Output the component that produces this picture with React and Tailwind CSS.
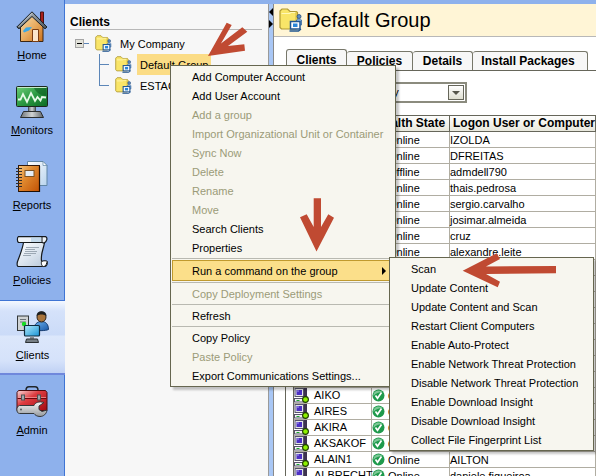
import React from "react";

function HomeIcon() {
  return (
    <svg width="32" height="32" viewBox="0 0 32 32" aria-hidden="true">
      <defs>
        <linearGradient id="wall" x1="0" y1="0" x2="1" y2="1">
          <stop offset="0" stopColor="#f6dcae" />
          <stop offset="0.5" stopColor="#e9ad62" />
          <stop offset="1" stopColor="#c96f1c" />
        </linearGradient>
        <linearGradient id="roof" x1="0" y1="0" x2="1" y2="0">
          <stop offset="0" stopColor="#4d565c" />
          <stop offset="0.5" stopColor="#9aa2a8" />
          <stop offset="1" stopColor="#4b5459" />
        </linearGradient>
      </defs>
      <path d="M24.500 1h3v13h-3z" fill="#a8201c" stroke="#4a1210" />
      <path d="M4.500 16L16 5l11 11v14.500h-22.500z" fill="url(#wall)" stroke="#3b2512" />
      <path d="M7 20l3-3.500 6-.5-3 3.500-5 2z" fill="#3aa7e6" />
      <path d="M16.500 18.500h6v12h-6z" fill="#fbe6cb" stroke="#7a3c10" />
      <path d="M16 .8L31 16l-2 1.800L16 5.500 3 17.800.8 16z" fill="url(#roof)" stroke="#1d2326" />
      <path d="M16 2.300L2.500 16" stroke="#e2e7ea" strokeWidth="0.800" />
    </svg>
  );
}

function MonitorsIcon() {
  return (
    <svg width="32" height="32" viewBox="0 0 32 32" aria-hidden="true">
      <defs>
        <linearGradient id="screen" x1="0" y1="0" x2="1" y2="1">
          <stop offset="0" stopColor="#6fd07a" />
          <stop offset="0.5" stopColor="#2c9a42" />
          <stop offset="1" stopColor="#0b6a24" />
        </linearGradient>
        <linearGradient id="metal" x1="0" y1="0" x2="1" y2="0">
          <stop offset="0" stopColor="#6d7276" />
          <stop offset="0.5" stopColor="#d0d3d5" />
          <stop offset="1" stopColor="#5c6165" />
        </linearGradient>
      </defs>
      <path d="M12.500 20h7v6h-7z" fill="url(#metal)" stroke="#4c5154" />
      <path d="M7.500 25.500h17l3 6h-23z" fill="url(#metal)" stroke="#2b2e30" />
      <rect x="0.500" y="0.500" width="31" height="20" rx="1" fill="url(#screen)" stroke="#1c261e" />
      <path d="M1.500 1.500h29" stroke="#c6ebc9" />
      <path d="M18 2h12.500v8C26 10 20 7 18 2z" fill="#0c5a20" opacity="0.550" />
      <path d="M2 13.500h2.500L7 8l4 8 4-9 4 8 2.500-4 3 3.500L26 11l4 .5" fill="none" stroke="#e8fbe8" strokeWidth="1.800" />
    </svg>
  );
}

function ReportsIcon() {
  return (
    <svg width="32" height="32" viewBox="0 0 32 32" aria-hidden="true">
      <defs>
        <linearGradient id="book" x1="0" y1="0" x2="1" y2="1">
          <stop offset="0" stopColor="#f7c880" />
          <stop offset="0.400" stopColor="#e08a30" />
          <stop offset="1" stopColor="#c25204" />
        </linearGradient>
        <linearGradient id="sheet" x1="0" y1="0" x2="1" y2="1">
          <stop offset="0" stopColor="#ffffff" />
          <stop offset="1" stopColor="#b9d4ee" />
        </linearGradient>
      </defs>
      <path d="M11.500 .5H27l4 4v20H11.500z" fill="url(#sheet)" stroke="#6186a5" />
      <path d="M27 .5v4h4z" fill="#fff" stroke="#6186a5" strokeWidth="0.700" />
      <rect x="2.500" y="4.500" width="21" height="26" fill="url(#book)" stroke="#33190a" />
      <path d="M3 30.500h20.500V5" fill="none" stroke="#1d0e06" strokeWidth="1.200" />
      <rect x="9" y="9.500" width="9" height="6" fill="#e5eef6" stroke="#7c5427" />
      <path d="M0 7.500h6M0 10.500h6M0 13.500h6M0 16.500h6M0 19.500h6M0 22.500h6M0 25.500h6" stroke="#2f2a28" strokeWidth="1" />
    </svg>
  );
}

function PoliciesIcon() {
  return (
    <svg width="32" height="32" viewBox="0 0 32 32" aria-hidden="true">
      <defs>
        <linearGradient id="paper" x1="0" y1="0" x2="1" y2="1">
          <stop offset="0" stopColor="#ffffff" />
          <stop offset="0.500" stopColor="#dce5ef" />
          <stop offset="1" stopColor="#b6c6d8" />
        </linearGradient>
      </defs>
      <path d="M7.500 6.500h21c-1 7-4 11-3 18.500l5.500.5c.5 2 0 4.500-2 5H2c-1.500-1-1-3-.5-5C4 19 6.500 13 7.500 6.500z" fill="url(#paper)" stroke="#15191c" strokeWidth="1.200" />
      <path d="M2.500.6h27c2.500 1 1.500 5-1.500 6.500l-2-.6H2.500C1 5.500 1 1.500 2.500.6z" fill="#eef3f8" stroke="#15191c" strokeWidth="1.200" />
      <path d="M15 1.200h10v4.800H15z" fill="#a9c9e4" opacity="0.600" />
      <path d="M26 1v5.500" stroke="#15191c" />
      <path d="M25.500 25.500c2-1 5.500-1 5.500 0s-1 5-3 5c-2 .5-3-2.500-2.500-5z" fill="#fff" stroke="#15191c" />
      <path d="M10 11.500h13M9 13.500h10M9 15.500h12M8 17.500h12M7 19.500h8" stroke="#8b98a4" strokeWidth="0.800" />
    </svg>
  );
}

function ClientsIcon() {
  return (
    <svg width="32" height="32" viewBox="0 0 32 32" aria-hidden="true">
      <defs>
        <linearGradient id="shirt" x1="0" y1="0" x2="1" y2="1">
          <stop offset="0" stopColor="#6cb4f0" />
          <stop offset="1" stopColor="#1b58a8" />
        </linearGradient>
        <linearGradient id="glass" x1="0" y1="0" x2="1" y2="1">
          <stop offset="0" stopColor="#b4ebfb" />
          <stop offset="1" stopColor="#1793d6" />
        </linearGradient>
      </defs>
      <rect x="0.500" y="5" width="11" height="14.500" fill="#cfd3d5" stroke="#33383b" />
      <path d="M3 8.500h6M3 11h6" stroke="#6b7378" />
      <circle cx="7" cy="13" r="2.200" fill="#15dd22" />
      <path d="M17 18.500c0-5 3-8 7.500-8s7 3 7 8c-3 1.500-12 1.500-14.500 0z" fill="url(#shirt)" stroke="#173e72" />
      <ellipse cx="24.500" cy="6" rx="4.500" ry="5" fill="#a8743c" stroke="#2d2118" />
      <path d="M19.500 5c0-3 2-4.700 5-4.700S29.500 2 29.500 5c-3-2-7-2-10 0z" fill="#1c1f21" />
      <rect x="7.500" y="14.500" width="15" height="10.500" rx="1" fill="url(#glass)" stroke="#0d2a3d" strokeWidth="1.200" />
      <path d="M13 25.500h4V28h-4z" fill="#8b9298" />
      <path d="M9.500 28h11l1 3.500h-13z" fill="#777f85" stroke="#2b3033" />
    </svg>
  );
}

function AdminIcon() {
  return (
    <svg width="32" height="32" viewBox="0 0 32 32" aria-hidden="true">
      <defs>
        <linearGradient id="box" x1="0" y1="0" x2="1" y2="1">
          <stop offset="0" stopColor="#fbdada" />
          <stop offset="0.400" stopColor="#dd3c40" />
          <stop offset="1" stopColor="#a30812" />
        </linearGradient>
        <linearGradient id="steel" x1="0" y1="0" x2="0" y2="1">
          <stop offset="0" stopColor="#f7f7f7" />
          <stop offset="1" stopColor="#94999d" />
        </linearGradient>
      </defs>
      <path d="M10 4.500C10 2 11.500 .8 13 .8h6c2 0 3 1.200 3 3.700" fill="none" stroke="#21262a" strokeWidth="1.500" />
      <path d="M2.500 4.500h27l1.500 2v18H1v-18z" fill="url(#box)" stroke="#4c0b0e" />
      <path d="M1.500 12.500h29" stroke="#6d060c" />
      <path d="M2 11.500h28" stroke="#f5a0a2" strokeWidth="0.700" />
      <rect x="5.500" y="9" width="3" height="5" fill="#a3a8ab" stroke="#4d5255" />
      <rect x="21.500" y="9" width="3" height="5" fill="#a3a8ab" stroke="#4d5255" />
      <path d="M3.500 19.500h14.500c1-3 5-4.500 10-3l-5 3.500v3.500l3 2 5-1.500c-.5 4-3.500 6.500-7 6.500-3 0-5-1.500-6-3H3.500C0 27.500 0 20 3.500 19.500z" fill="url(#steel)" stroke="#33373a" />
      <circle cx="5" cy="23.500" r="1" fill="#555b5f" />
    </svg>
  );
}

function GroupFolder({ size }) {
  return (
    <svg width={size} height={size} viewBox="0 0 24 24" className="shrink-0" aria-hidden="true">
      <path d="M1 3l2-2h5.500L11 3.500h6.500l1 1V19l-1.500 2H2.500L1 19.500z" fill="#f9e568" stroke="#b09a35" strokeWidth="1.200" />
      <path d="M2.500 5.500h8l1.500-1h5" fill="none" stroke="#fff8b8" strokeWidth="1.200" />
      <path d="M17 3.500v16" stroke="#d3b93a" strokeWidth="1" />
      <circle cx="20" cy="8.500" r="2" fill="#5d8cc0" stroke="#2b4f7d" strokeWidth="0.800" />
      <path d="M17.500 12c.5-1.500 4.500-1.500 5 0v5h-5z" fill="#8fb9e4" stroke="#3a679c" strokeWidth="0.800" />
      <rect x="11.500" y="13.500" width="9.500" height="7.500" fill="#fff" stroke="#205590" strokeWidth="1.500" />
      <rect x="14" y="15.500" width="4.500" height="3.500" fill="#2a86d8" />
      <path d="M10.500 23h9l2.500-2" fill="none" stroke="#205590" strokeWidth="1.400" />
    </svg>
  );
}

function ComputerIcon() {
  return (
    <svg width="15" height="15" viewBox="0 0 15 15" className="shrink-0" aria-hidden="true">
      <path d="M9 0h4v14H9z" fill="#3d3350" />
      <path d="M9 1h1v10H9z" fill="#d8d8e0" />
      <rect x="1" y="0.500" width="8.500" height="8" fill="#e4e4e8" stroke="#55536a" />
      <rect x="2.500" y="2" width="5.500" height="5" fill="#4c2fc4" />
      <path d="M3 2.500h2v1H3z" fill="#a9a0ee" />
      <rect x="0.500" y="10.500" width="9" height="3.500" fill="#f4f4f4" stroke="#55536a" />
      <path d="M2.500 12.500h3" stroke="#18a52a" />
      <circle cx="11.500" cy="11.500" r="2.900" fill="#8cf000" stroke="#1c3a00" strokeWidth="1.100" />
    </svg>
  );
}

function CheckIcon() {
  return (
    <svg width="13" height="13" viewBox="0 0 13 13" className="shrink-0" aria-hidden="true">
      <circle cx="6.500" cy="6.500" r="6" fill="#1f9a4c" />
      <path d="M1.500 5a5.500 5.500 0 0 1 9-2C7 3 4 4 1.500 7z" fill="#7cc795" />
      <path d="M3.500 6.500l2 2.800L9.500 3.500" fill="none" stroke="#fff" strokeWidth="1.700" />
    </svg>
  );
}

const sections = [
  { label: "Home", Icon: HomeIcon },
  { label: "Monitors", Icon: MonitorsIcon },
  { label: "Reports", Icon: ReportsIcon },
  { label: "Policies", Icon: PoliciesIcon },
  { label: "Clients", Icon: ClientsIcon, active: true },
  { label: "Admin", Icon: AdminIcon },
];

function Sidebar() {
  return (
    <nav className="flex w-[65px] shrink-0 flex-col bg-[#8eb1ec]">
      {sections.map(({ label, Icon, active }) => (
        <button
          key={label}
          type="button"
          className={
            active
              ? "flex h-[75px] shrink-0 flex-col items-center border-t border-b-2 border-t-[#3f74d4] border-b-[#7088dc] bg-[linear-gradient(#f4f8ff_0px,#d5e2fa_10px,#cbdbf8_34px,#dce7fb_35px,#d5e2fa_60px,#c0d1f4_72px)] pt-[10px]"
              : "flex h-[75px] shrink-0 flex-col items-center border-r border-[#3f74d4] pt-[11px]"
          }
        >
          <Icon />
          <span className="mt-1 leading-4">
            <u>{label[0]}</u>
            {label.slice(1)}
          </span>
        </button>
      ))}
      <div className="grow border-r border-[#3f74d4]" />
    </nav>
  );
}

function TreePanel() {
  return (
    <aside className="w-[204px] shrink-0 border-r border-[#9a9a9a] bg-[#f7f7f7]">
      <h2 className="mr-[6px] ml-[5px] border-b border-[#b8b8b8] pt-[11px] text-xs leading-[14px] font-bold">Clients</h2>
      <ul className="pt-[3px]">
        <li>
          <div className="flex h-[21px] items-center pl-[10px]">
            <button type="button" aria-label="Collapse My Company" className="flex size-[9px] items-center justify-center border border-[#a5a5a5] bg-[#e2e2da]">
              <span className="h-px w-[5px] bg-black" />
            </button>
            <span className="mr-[6px] h-px w-[5px] bg-[#5c86b8]" />
            <GroupFolder size={17} />
            <span className="ml-2 leading-[22px]">My Company</span>
          </div>
          <ul>
            <li className="flex h-[21px] items-center pl-[34px]">
              <span className="mr-[6px] flex w-[10px] items-center self-stretch border-l border-[#5c86b8]">
                <span className="h-px w-full bg-[#5c86b8]" />
              </span>
              <GroupFolder size={17} />
              <span className="ml-[5px] h-[21px] bg-[#fbdc86] px-[3px] leading-[22px]">Default Group</span>
            </li>
            <li className="flex h-[21px] items-center pl-[34px]">
              <span className="mr-[6px] h-[11px] w-[10px] self-start border-b border-l border-[#5c86b8]" />
              <GroupFolder size={17} />
              <span className="ml-[5px] px-[3px] leading-[22px]">ESTAG</span>
            </li>
          </ul>
        </li>
      </ul>
    </aside>
  );
}

const clients = [
  { state: "Online", user: "IZOLDA" },
  { state: "Online", user: "DFREITAS" },
  { state: "Offline", user: "admdell790" },
  { state: "Online", user: "thais.pedrosa" },
  { state: "Online", user: "sergio.carvalho" },
  { state: "Online", user: "josimar.almeida" },
  { state: "Online", user: "cruz" },
  { state: "Online", user: "alexandre.leite" },
  {}, {}, {}, {}, {}, {}, {}, {},
  { name: "AIKO", state: "Online" },
  { name: "AIRES", state: "Online" },
  { name: "AKIRA", state: "Online" },
  { name: "AKSAKOF", state: "Online" },
  { name: "ALAIN1", state: "Online", user: "AILTON" },
  { name: "ALBRECHT", state: "Online", user: "daniele.figueiroa" },
];

const headCell = "h-[17px] border-y border-r border-[#66665a] p-0 text-xs leading-[15px] whitespace-nowrap";
const bodyCell = "h-4 border-r border-b border-[#b0ada2] p-0";

function ClientTable() {
  return (
    <table className="w-full table-fixed border-separate border-spacing-0 border-l border-[#66665a]">
      <colgroup>
        <col className="w-[78px]" />
        <col className="w-[78px]" />
        <col />
      </colgroup>
      <thead className="bg-[linear-gradient(#ffffff,#e6e6da)]">
        <tr>
          <th className={headCell}>Name</th>
          <th className={headCell}>Health State</th>
          <th className={headCell + " pl-[3px] text-left"}>Logon User or Computer</th>
        </tr>
      </thead>
      <tbody>
        {clients.map((c, i) => (
          <tr key={i}>
            <td className={bodyCell}>
              {c.name && (
                <div className="flex h-[15px] items-center gap-[5px]">
                  <ComputerIcon />
                  <span className="leading-[17px]">{c.name}</span>
                </div>
              )}
            </td>
            <td className={bodyCell}>
              {c.state && (
                <div className="flex h-[15px] items-center gap-[3px]">
                  <CheckIcon />
                  <span className="h-[15px] leading-[17px]">{c.state}</span>
                </div>
              )}
            </td>
            <td className={bodyCell}>
              <div className="h-[15px] leading-[17px]">{c.user}</div>
            </td>
          </tr>
        ))}
      </tbody>
    </table>
  );
}

const tab = "h-[19px] rounded-t-[3px] border border-b-0 border-[#77776a] bg-[#f7f7f7] text-xs leading-[18px] font-bold whitespace-nowrap";

function GroupPage() {
  return (
    <main className="flex min-w-0 flex-1 flex-col overflow-hidden bg-white">
      <header className="flex h-[33px] shrink-0 items-center gap-[3px] border-b border-[#b8b8b8] bg-[#fff5d6] pl-[5px]">
        <GroupFolder size={24} />
        <h1 className="text-xl leading-8">Default Group</h1>
      </header>
      <div className="flex h-[33px] shrink-0 items-end pl-3" role="tablist">
        <button type="button" role="tab" aria-selected="true" className={tab + " h-[21px] w-[61px] pb-px"}>Clients</button>
        <button type="button" role="tab" className={tab + " w-[66px] border-l-0"}>Policies</button>
        <button type="button" role="tab" className={tab + " w-[60px] border-l-0"}>Details</button>
        <button type="button" role="tab" className={tab + " w-[115px] border-l-0 pr-1"}>Install Packages</button>
      </div>
      <section className="ml-[11px] grow border-t border-l border-[#66665a] pt-[11px]">
        <div className="relative mb-3 ml-[3px] h-[21px] w-[178px]">
          <select aria-label="View" className="size-full appearance-none border-2 border-[#8b8b7e] bg-white pl-0.5 text-[11px] outline-none">
            <option>Protection technology</option>
          </select>
          <span className="pointer-events-none absolute top-[3px] right-[3px] flex h-[15px] w-4 items-center justify-center border border-[#66665a] bg-[linear-gradient(#ffffff,#deded0)]">
            <svg width="8" height="4" viewBox="0 0 8 4" aria-hidden="true">
              <path d="M0 0h8L4 4z" fill="#55554a" />
            </svg>
          </span>
        </div>
        <div className="pl-[7px]">
          <ClientTable />
        </div>
      </section>
    </main>
  );
}

function Item({ children, disabled }) {
  return (
    <button
      type="button"
      role="menuitem"
      disabled={disabled}
      className={
        disabled
          ? "block h-[19px] w-full pt-px pl-[21px] text-left leading-[18px] whitespace-nowrap text-[#9b9b78]"
          : "block h-[19px] w-full pt-px pl-[21px] text-left leading-[18px] whitespace-nowrap"
      }
    >
      {children}
    </button>
  );
}

function Separator() {
  return <hr className="mx-px my-px h-px border-0 bg-[#b9b9b1]" />;
}

function ContextMenu() {
  return (
    <div role="menu" className="absolute top-[65px] left-[170px] w-[226px] border border-[#66664f] bg-[#f7f6ef] py-px shadow-[3px_3px_2px_rgba(0,0,0,0.22)]">
      <Item>Add Computer Account</Item>
      <Item>Add User Account</Item>
      <Item disabled>Add a group</Item>
      <Item disabled>Import Organizational Unit or Container</Item>
      <Item disabled>Sync Now</Item>
      <Item disabled>Delete</Item>
      <Item disabled>Rename</Item>
      <Item disabled>Move</Item>
      <Item>Search Clients</Item>
      <Item>Properties</Item>
      <Separator />
      <button
        type="button"
        role="menuitem"
        aria-haspopup="menu"
        aria-expanded="true"
        className="mx-px flex h-[21px] w-[222px] items-center justify-between border border-[#c09a2e] bg-[#fbdf8a] pt-px pr-[7px] pl-[19px] leading-[18px]"
      >
        Run a command on the group
        <svg width="4" height="8" viewBox="0 0 4 8" aria-hidden="true">
          <path d="M0 0l4 4-4 4z" fill="#000" />
        </svg>
      </button>
      <Separator />
      <Item disabled>Copy Deployment Settings</Item>
      <Separator />
      <Item>Refresh</Item>
      <Separator />
      <Item>Copy Policy</Item>
      <Item disabled>Paste Policy</Item>
      <Item>Export Communications Settings...</Item>
    </div>
  );
}

function CommandMenu() {
  return (
    <div role="menu" className="absolute top-[257px] left-[389px] w-[205px] border border-[#66664f] bg-[#f7f6ef] py-px shadow-[3px_3px_2px_rgba(0,0,0,0.22)]">
      <Item>Scan</Item>
      <Item>Update Content</Item>
      <Item>Update Content and Scan</Item>
      <Item>Restart Client Computers</Item>
      <Item>Enable Auto-Protect</Item>
      <Item>Enable Network Threat Protection</Item>
      <Item>Disable Network Threat Protection</Item>
      <Item>Enable Download Insight</Item>
      <Item>Disable Download Insight</Item>
      <Item>Collect File Fingerprint List</Item>
    </div>
  );
}

function Arrows() {
  return (
    <svg width="596" height="476" viewBox="0 0 596 476" className="pointer-events-none absolute top-0 left-0" aria-hidden="true">
      <g fill="#c04a32">
        <path d="M208 56l18.700-33.300 5 2.300L221 43.500l21.300-16.200 5 4.400L228 46l16.300-1.700.7 6.400z" />
        <path d="M313.700 198.300h7.300V227l7.300-12.700 5.700 3.400L316.500 251.500 300 217.300l6.700-3 7 12.700z" />
        <path d="M462.700 270.700l34-17.400 3.300 5.700-14 7.500 70-.5v7.300l-70 .7 14 7.700-2.300 5.600z" />
      </g>
    </svg>
  );
}

export default function App() {
  return (
    <div className="relative flex h-screen overflow-hidden bg-[#8eb1ec] font-['Liberation_Sans',Arial,sans-serif] text-[11px] text-black">
      <Sidebar />
      <div className="flex min-w-0 flex-1 pt-1">
        <TreePanel />
        <div className="flex w-[5px] shrink-0 flex-col items-center gap-1 border-r border-[#8a8a8a] bg-[#a9c7f5] pt-1">
          <svg width="4" height="8" viewBox="0 0 4 8" aria-hidden="true">
            <path d="M4 0L0 4l4 4z" />
          </svg>
          <svg width="4" height="8" viewBox="0 0 4 8" aria-hidden="true">
            <path d="M0 0l4 4-4 4z" />
          </svg>
        </div>
        <GroupPage />
      </div>
      <ContextMenu />
      <CommandMenu />
      <Arrows />
    </div>
  );
}
